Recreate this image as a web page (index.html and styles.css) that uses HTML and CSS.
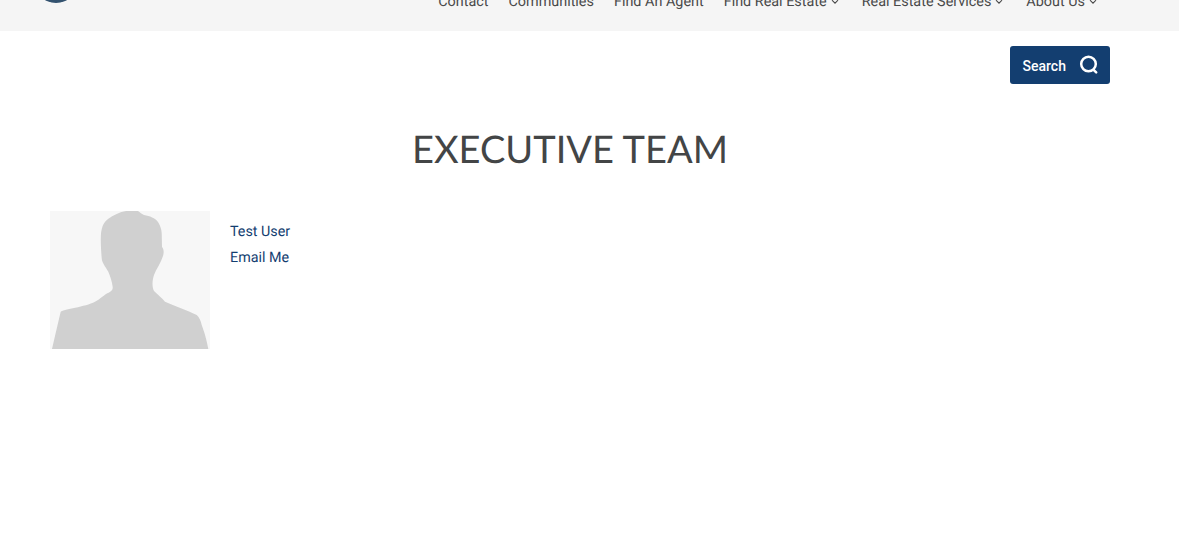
FILE: index.html
```html
<!DOCTYPE html>
<html lang="en">
<head>
<meta charset="utf-8">
<title>Executive Team</title>
<link rel="stylesheet" href="styles.css">
</head>
<body>
<header class="topbar">
  <div class="logo"></div>
  <nav class="nav">
    <a class="nav-item">Contact</a>
    <a class="nav-item">Communities</a>
    <a class="nav-item">Find An Agent</a>
    <a class="nav-item">Find Real Estate<svg class="caret" viewBox="0 0 8 6"><path d="M1 1.2 4 4.2 7 1.2"/></svg></a>
    <a class="nav-item">Real Estate Services<svg class="caret" viewBox="0 0 8 6"><path d="M1 1.2 4 4.2 7 1.2"/></svg></a>
    <a class="nav-item">About Us<svg class="caret" viewBox="0 0 8 6"><path d="M1 1.2 4 4.2 7 1.2"/></svg></a>
  </nav>
</header>
<main class="content">
  <div class="search-row">
    <button class="search-btn"><span class="search-label">Search</span>
      <svg class="search-icon" viewBox="0 0 20 20"><circle cx="9.5" cy="9" r="7.3"/><path d="M14.6 14.8 17.2 17.4"/></svg>
    </button>
  </div>
  <h1 class="title">EXECUTIVE TEAM</h1>
  <section class="member">
    <svg class="photo" viewBox="0 0 160 138">
      <rect width="160" height="138" fill="#f7f7f7"/>
      <path fill="#d0d0d0" d="M2 138 C5 125 8 112 10.7 100.7 C14 98 35 96 45 90.7 C50 88 53 85 56 83 C60 81 63 80 62.7 76 C62 70 60 65 58.3 60.7 C55 55 52 52 51.7 47.3 C51 38 50.5 30 51 22.3 C52 15 54 11 58 8 C63 4 70 1 76 0 L88 0 C90 1 91 3 94 4 C100 5 105 7 108 11 C110 14 111.5 18 111.7 22 L112 36 C114 38 114 42 113 45 C111 52 106 58 104 64 C102 70 102 76 104 80 C108 84 112 87 115 90.7 C125 95 137 99 146.7 104 C149 106 151 110 151.7 114 C154 120 157 130 158.3 138 Z"/>
    </svg>
    <div class="member-info">
      <a class="member-link">Test User</a>
      <a class="member-link">Email Me</a>
    </div>
  </section>
</main>
</body>
</html>
```

FILE: styles.css
```css
* { box-sizing: border-box; }
html, body { margin: 0; padding: 0; }
body {
  height: 537px;
  overflow: hidden;
  background: #fff;
  font-family: Roboto, "Liberation Sans", sans-serif;
  text-rendering: geometricPrecision;
}
.topbar {
  height: 31px;
  background: #f5f5f5;
  display: flex;
  justify-content: space-between;
  align-items: flex-start;
  overflow: hidden;
  padding: 0 79px 0 34px;
}
.logo {
  width: 44px;
  height: 44px;
  margin-top: -41px;
  border-radius: 50%;
  background: #33526f;
}
.nav {
  display: flex;
  gap: 20px;
  margin-top: -8px;
}
.nav-item {
  display: flex;
  align-items: center;
  font-size: 14.4px;
  line-height: 20px;
  color: #4a4a4a;
}
.caret {
  width: 8px;
  height: 6px;
  margin: 0 3px 0 4px;
  fill: none;
  stroke: #4a4a4a;
  stroke-width: 1.1;
}
.content { padding: 15px 69px 0 50px; }
.search-row { display: flex; justify-content: flex-end; }
.search-btn {
  width: 100px;
  height: 38px;
  display: flex;
  align-items: center;
  justify-content: space-between;
  padding: 0 11px 0 12.5px;
  background: #133e70;
  border: 0;
  border-radius: 3px;
  color: #fff;
  font: 500 14px Roboto, sans-serif;
}
.search-label { padding-top: 2px; }
.search-icon {
  width: 20px;
  height: 20px;
  fill: none;
  stroke: #fff;
  stroke-width: 2.5;
  stroke-linecap: round;
}
.title {
  margin: 42px 0 0;
  padding-right: 20px;
  text-align: center;
  font: 400 38px/47px Lato, sans-serif;
  color: #434546;
}
.member {
  display: flex;
  gap: 20px;
  margin-top: 38px;
}
.photo { width: 160px; height: 138px; display: block; }
.member-info { display: flex; flex-direction: column; gap: 6px; padding-top: 11px; }
.member-link {
  font-size: 14.3px;
  line-height: 20px;
  color: #133e70;
}
```
